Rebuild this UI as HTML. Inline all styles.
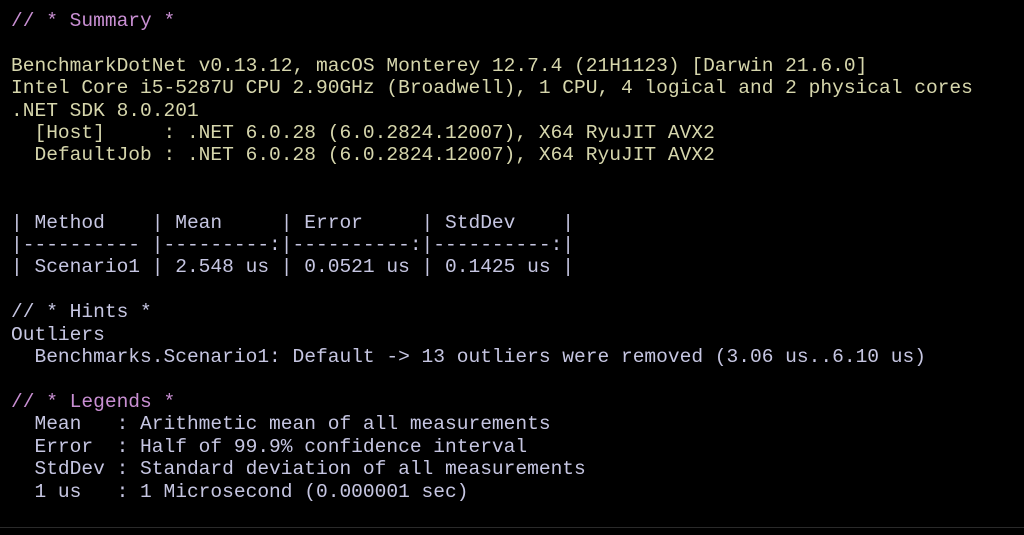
<!DOCTYPE html>
<html><head><meta charset="utf-8"><style>
html,body{margin:0;padding:0;background:#000;width:1024px;height:535px;overflow:hidden}
pre{margin:0;position:absolute;left:11px;top:10px;font-family:"Liberation Mono",monospace;font-size:19.56px;line-height:22.4px;color:#d6d6ac;white-space:pre}
.p{color:#c98fd3}.l{color:#c6c6e2}
.bar{position:absolute;left:0;right:0;top:527px;height:1px;background:#2a2a2a}
</style></head><body>
<pre><span class="p">// * Summary *</span>

BenchmarkDotNet v0.13.12, macOS Monterey 12.7.4 (21H1123) [Darwin 21.6.0]
Intel Core i5-5287U CPU 2.90GHz (Broadwell), 1 CPU, 4 logical and 2 physical cores
.NET SDK 8.0.201
  [Host]     : .NET 6.0.28 (6.0.2824.12007), X64 RyuJIT AVX2
  DefaultJob : .NET 6.0.28 (6.0.2824.12007), X64 RyuJIT AVX2


<span class="l">| Method    | Mean     | Error     | StdDev    |
|---------- |---------:|----------:|----------:|
| Scenario1 | 2.548 us | 0.0521 us | 0.1425 us |

// * Hints *
Outliers
  Benchmarks.Scenario1: Default -&gt; 13 outliers were removed (3.06 us..6.10 us)</span>

<span class="p">// * Legends *</span>
<span class="l">  Mean   : Arithmetic mean of all measurements
  Error  : Half of 99.9% confidence interval
  StdDev : Standard deviation of all measurements
  1 us   : 1 Microsecond (0.000001 sec)</span>
</pre>
<div class="bar"></div>
</body></html>
